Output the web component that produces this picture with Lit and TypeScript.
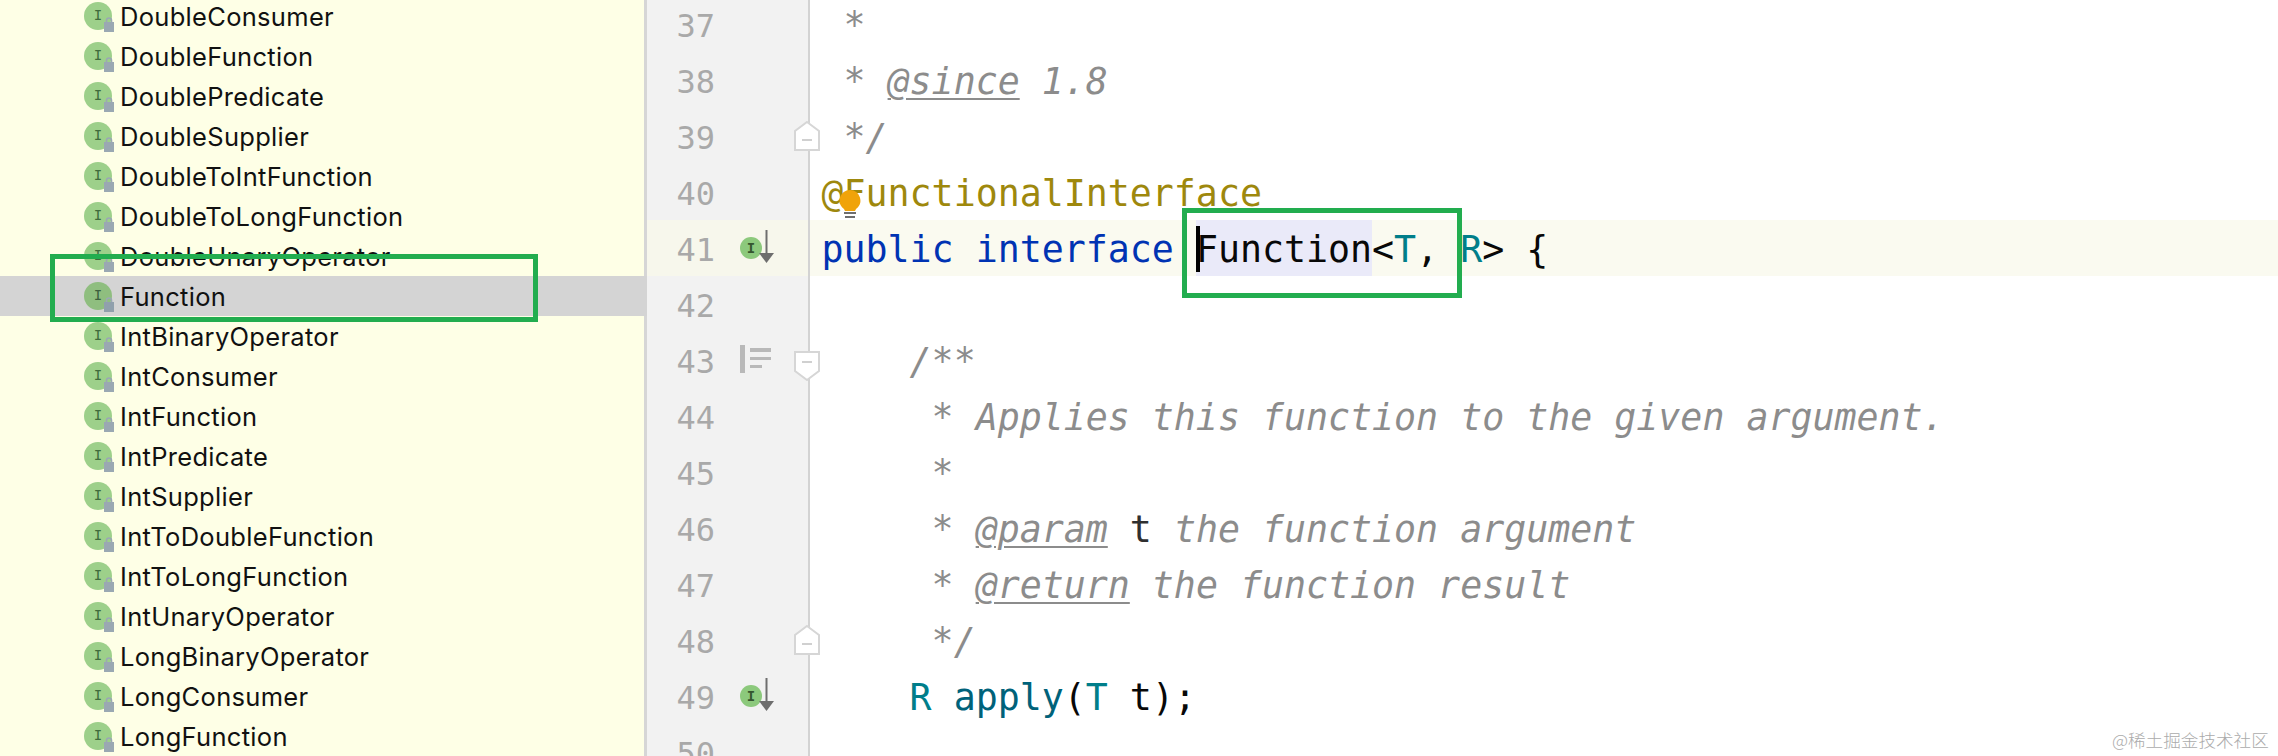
import { LitElement, html, css } from "lit";
import { customElement } from "lit/decorators.js";

const NAMES = [
  "DoubleConsumer", "DoubleFunction", "DoublePredicate", "DoubleSupplier", "DoubleToIntFunction",
  "DoubleToLongFunction", "DoubleUnaryOperator", "Function", "IntBinaryOperator", "IntConsumer",
  "IntFunction", "IntPredicate", "IntSupplier", "IntToDoubleFunction", "IntToLongFunction",
  "IntUnaryOperator", "LongBinaryOperator", "LongConsumer", "LongFunction",
];

const listIcon = (sel: boolean) => html`<svg class="licon" width="31" height="31" viewBox="0 0 31 31">
  <circle cx="14" cy="14" r="14" fill=${sel ? "#8fbe7f" : "#9dd08a"}></circle>
  <text x="14" y="18" text-anchor="middle" class="ichar" fill=${sel ? "#3d5f3d" : "#3f6a3c"}>I</text>
  <path d="M22.500 20v-1.500a2.500 2.500 0 0 1 5 0V20" fill="none" stroke="#9aa8b2" stroke-width="1.600"></path>
  <rect x="20" y="20" width="10" height="10" fill=${sel ? "#90a0ac" : "#9aa8b2"}></rect>
</svg>`;

const implIcon = html`<svg class="gicon" width="36" height="36" viewBox="0 0 36 36">
  <circle cx="11" cy="18" r="11" fill="#8cc97c"></circle>
  <text x="11" y="23" text-anchor="middle" class="gchar">I</text>
  <path d="M26.500 0V25" stroke="#6e6e6e" stroke-width="2"></path>
  <path d="M19 23h15l-7.500 10z" fill="#6e6e6e"></path>
</svg>`;

const docIcon = html`<svg class="gicon" width="36" height="36" viewBox="0 0 36 36">
  <rect x="0" y="3" width="5" height="28" fill="#b9b9b9"></rect>
  <rect x="10" y="6" width="21" height="4" fill="#b9b9b9"></rect>
  <rect x="10" y="15" width="21" height="3" fill="#b9b9b9"></rect>
  <rect x="10" y="23" width="12" height="3" fill="#b9b9b9"></rect>
</svg>`;

const foldUp = html`<svg class="fold up" width="26" height="30" viewBox="0 0 26 30">
  <path d="M13 1 25 10V29H1V10Z" fill="#fff" stroke="#d6d6d6" stroke-width="2"></path>
  <path d="M8 19H18" stroke="#d0d0d0" stroke-width="2"></path>
</svg>`;
const foldDown = html`<svg class="fold down" width="26" height="30" viewBox="0 0 26 30">
  <path d="M1 1H25V20L13 29 1 20Z" fill="#fff" stroke="#d6d6d6" stroke-width="2"></path>
  <path d="M8 11H18" stroke="#d0d0d0" stroke-width="2"></path>
</svg>`;

const c = (t: string) => html`<span class="cm">${t}</span>`;
const tag = (t: string) => html`<span class="cm tag">${t}</span>`;

const LINES: { n: number; code?: unknown; icon?: unknown; fold?: unknown; cur?: boolean }[] = [
  { n: 37, code: c(" *") },
  { n: 38, code: html`${c(" * ")}${tag("@since")}${c(" 1.8")}` },
  { n: 39, code: c(" */"), fold: foldUp },
  { n: 40, code: html`<span class="ann">@FunctionalInterface</span>` },
  {
    n: 41, cur: true, icon: implIcon,
    code: html`<span class="kw">public interface </span><span class="hl">Function</span>&lt;<span class="tp">T</span>, <span class="tp">R</span>&gt; {`,
  },
  { n: 42 },
  { n: 43, code: c("    /**"), icon: docIcon, fold: foldDown },
  { n: 44, code: c("     * Applies this function to the given argument.") },
  { n: 45, code: c("     *") },
  { n: 46, code: html`${c("     * ")}${tag("@param")} <span class="pn">t</span>${c(" the function argument")}` },
  { n: 47, code: html`${c("     * ")}${tag("@return")}${c(" the function result")}` },
  { n: 48, code: c("     */"), fold: foldUp },
  { n: 49, icon: implIcon, code: html`    <span class="tp">R</span> <span class="fn">apply</span>(<span class="tp">T</span> t);` },
  { n: 50 },
];

@customElement("app-root")
export class AppRoot extends LitElement {
  static styles = css`
    :host { display: block; width: 2278px; height: 756px; overflow: hidden; position: relative; background: #fff; }
    .page { display: flex; height: 756px; overflow: hidden; }
    .tree { width: 644px; flex: none; background: #feffe6; border-right: 3px solid #d6d6d6; }
    .rows { margin-top: -4px; }
    .row {
      height: 40px; display: flex; align-items: flex-start; padding-left: 84px;
      font: 400 25.500px/42px Inter, "Liberation Sans", sans-serif; letter-spacing: 0.300px; color: #111;
    }
    .row.sel { background: #d4d4d4; margin-right: -3px; }
    .licon { flex: none; margin-top: 6px; margin-right: 5px; }
    .ichar { font: 400 14px "DejaVu Sans Mono", monospace; }
    .gchar { font: 700 14px "DejaVu Sans Mono", monospace; fill: #35562f; }
    .editor { flex: 1; min-width: 0; margin-top: -4px; }
    .line { height: 56px; display: flex; }
    .line.cur { background: #fafaf0; }
    .gut {
      position: relative; flex: none; width: 161px; display: flex; background: #f2f2f2;
      border-right: 2px solid #d3d3d3;
    }
    .cur .gut { background: #f7f7ec; }
    .num {
      width: 68px; flex: none; text-align: right; color: #a9a9a9;
      font: 400 32px/60px "DejaVu Sans Mono", monospace;
    }
    .gicon { flex: none; margin: 0 0 0 25px; overflow: visible; position: relative; top: 10px; }
    .fold { position: absolute; left: 147px; }
    .fold.up { top: 13px; }
    .fold.down { top: 19px; }
    .code {
      flex: 1; min-width: 0; padding-left: 11.500px; white-space: pre; color: #080808;
      font: 400 36.600px/60px "DejaVu Sans Mono", monospace;
    }
    .cm { color: #8c8c8c; font-style: italic; }
    .tag { text-decoration: underline; text-underline-offset: 4px; text-decoration-thickness: 2px; }
    .ann { color: #9e880d; }
    .kw { color: #0033b3; }
    .tp { color: #007e8a; }
    .fn { color: #00627a; }
    .pn { color: #2f2f2f; }
    .hl { display: inline-block; background: #eaeaf9; position: relative; height: 56px; }
    .hl::before { content: ""; position: absolute; left: 0; top: 6px; width: 4px; height: 46px; background: #000; }
    .box { position: absolute; border: 5px solid #22ad4f; box-sizing: border-box; pointer-events: none; }
    .box.a { left: 50px; top: 254px; width: 488px; height: 68px; }
    .box.b { left: 1182px; top: 208px; width: 280px; height: 90px; }
    .bulb { position: absolute; left: 839px; top: 190px; }
    .mark {
      position: absolute; left: 2112px; top: 729px; color: #ababab; white-space: nowrap;
      font: 300 17.600px/22px "Noto Sans CJK SC", sans-serif;
    }
  `;

  render() {
    return html`
      <div class="page">
        <div class="tree">
          <div class="rows">
            ${NAMES.map((n) => html`<div class="row ${n === "Function" ? "sel" : ""}">${listIcon(n === "Function")}<span>${n}</span></div>`)}
          </div>
        </div>
        <div class="editor">
          ${LINES.map((l) => html`<div class="line ${l.cur ? "cur" : ""}">
            <div class="gut"><span class="num">${l.n}</span>${l.icon ?? ""}${l.fold ?? ""}</div>
            <div class="code">${l.code ?? ""}</div>
          </div>`)}
        </div>
      </div>
      <svg class="bulb" width="22" height="28" viewBox="0 0 22 28">
        <path d="M11 0a10.500 10.500 0 0 1 6 19l-1 2H6l-1-2A10.500 10.500 0 0 1 11 0z" fill="#f0a30a"></path>
        <rect x="5" y="22" width="12" height="2" fill="#6e6e6e"></rect>
        <rect x="6" y="26" width="10" height="2" fill="#6e6e6e"></rect>
      </svg>
      <div class="box a"></div>
      <div class="box b"></div>
      <div class="mark">@稀土掘金技术社区</div>
    `;
  }
}
